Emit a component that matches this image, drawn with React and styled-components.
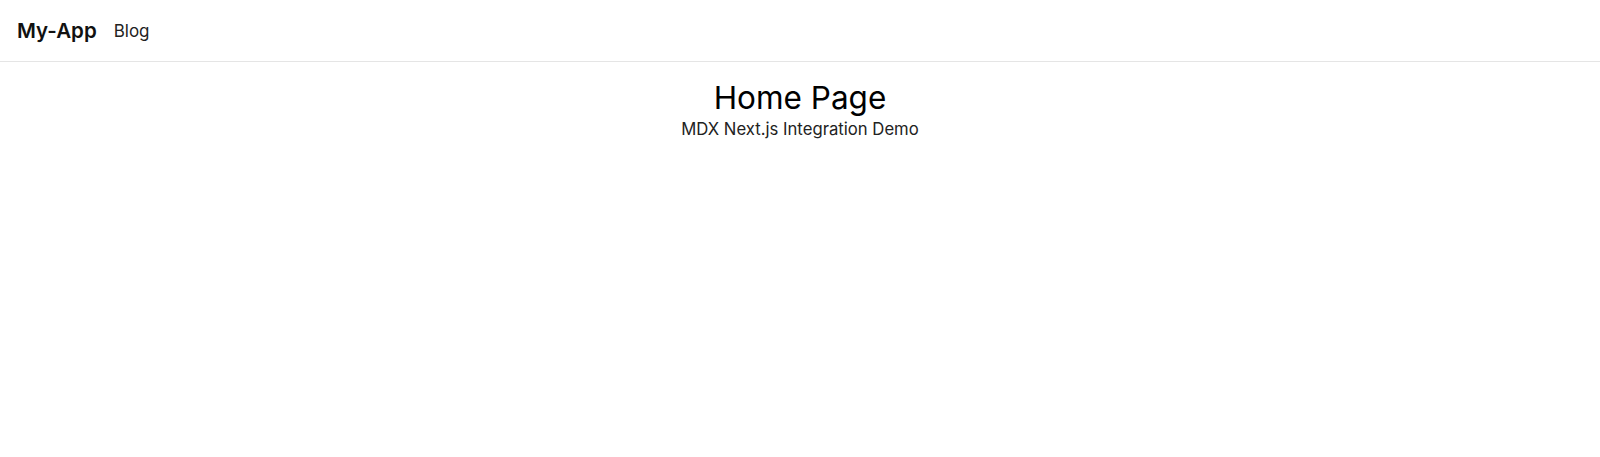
import React from 'react';
import styled, { createGlobalStyle } from 'styled-components';

const GlobalStyle = createGlobalStyle`
  body {
    margin: 0;
    background: #fff;
    font-family: Inter, 'Liberation Sans', sans-serif;
    color: #111;
  }
`;

const NavBar = styled.nav`
  display: flex;
  align-items: center;
  gap: 17px;
  height: 61px;
  padding: 0 17px;
  border-bottom: 1px solid #e5e5e5;
`;

const Brand = styled.a`
  font-size: 20.5px;
  font-weight: 600;
  color: #111;
  text-decoration: none;
`;

const NavLink = styled.a`
  font-size: 17px;
  color: #222;
  text-decoration: none;
`;

const Main = styled.main`
  display: flex;
  flex-direction: column;
  align-items: center;
  padding-top: 17px;
`;

const Title = styled.h1`
  margin: 0;
  font-size: 31.5px;
  font-weight: 400;
  line-height: 38px;
  color: #000;
`;

const Subtitle = styled.p`
  margin: 2px 0 0;
  font-size: 16.7px;
  line-height: 20px;
  color: #222;
`;

const App = () => {
  return (
    <>
      <GlobalStyle />
      <NavBar>
        <Brand href='#'>My-App</Brand>
        <NavLink href='#'>Blog</NavLink>
      </NavBar>
      <Main>
        <Title>Home Page</Title>
        <Subtitle>MDX Next.js Integration Demo</Subtitle>
      </Main>
    </>
  );
};

export default App;
